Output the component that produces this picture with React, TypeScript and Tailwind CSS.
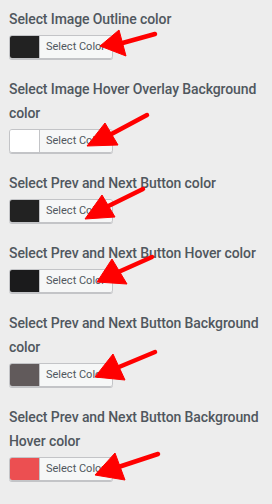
import React from "react";

const items: { label: string; color: string }[] = [
  { label: "Select Image Outline color", color: "#222222" },
  { label: "Select Image Hover Overlay Background color", color: "#ffffff" },
  { label: "Select Prev and Next Button color", color: "#222222" },
  { label: "Select Prev and Next Button Hover color", color: "#1b1b1c" },
  { label: "Select Prev and Next Button Background color", color: "#615a5b" },
  { label: "Select Prev and Next Button Background Hover color", color: "#ec4f51" },
];

const arrows = [
  { tip: [100, 46], up: [119, 30], lo: [126, 56], tail: [155, 34] },
  { tip: [87, 146], up: [105, 123], lo: [118, 145], tail: [147, 115] },
  { tip: [85, 219], up: [102, 195], lo: [115, 217], tail: [143, 189] },
  { tip: [97, 282], up: [112, 259], lo: [127, 284], tail: [152, 257] },
  { tip: [95, 377], up: [113, 354], lo: [125, 380], tail: [155, 352] },
  { tip: [95, 475], up: [115, 453], lo: [125, 480], tail: [158, 454] },
];

export default function App() {
  return (
    <div
      className="relative min-h-[504px] w-[272px] bg-[#ededed] pl-[9px] pr-[2px] pt-[7px]"
      style={{ fontFamily: "Roboto, 'Liberation Sans', sans-serif" }}
    >
      {items.map((it) => (
        <div key={it.label} className="mb-[18px]">
          <p className="text-[14px] font-medium leading-[24px] tracking-[-0.1px] text-[#50575e]">{it.label}</p>
          <div className="mt-[4px] flex h-[24px] w-[104px] overflow-hidden rounded-[3px] border border-[#c3c4c7] shadow-[0_1px_0_#c3c4c7]">
            <div className="w-[30px] border-r border-[#c3c4c7]" style={{ backgroundColor: it.color }} />
            <div className="flex flex-1 items-center bg-[#f6f7f7] pl-[6px] text-[11px] text-[#50575e]">
              Select Color
            </div>
          </div>
        </div>
      ))}
      <svg className="pointer-events-none absolute left-0 top-0" width="272" height="504" viewBox="0 0 272 504">
        {arrows.map((a, i) => {
          const bx = (a.up[0] + a.lo[0]) / 2;
          const by = (a.up[1] + a.lo[1]) / 2;
          return (
            <g key={i} fill="#ff0000" stroke="#ff0000">
              <line x1={bx} y1={by} x2={a.tail[0]} y2={a.tail[1]} strokeWidth="4.5" strokeLinecap="round" />
              <polygon points={`${a.tip[0]},${a.tip[1]} ${a.up[0]},${a.up[1]} ${a.lo[0]},${a.lo[1]}`} strokeWidth="1" strokeLinejoin="round" />
            </g>
          );
        })}
      </svg>
    </div>
  );
}
